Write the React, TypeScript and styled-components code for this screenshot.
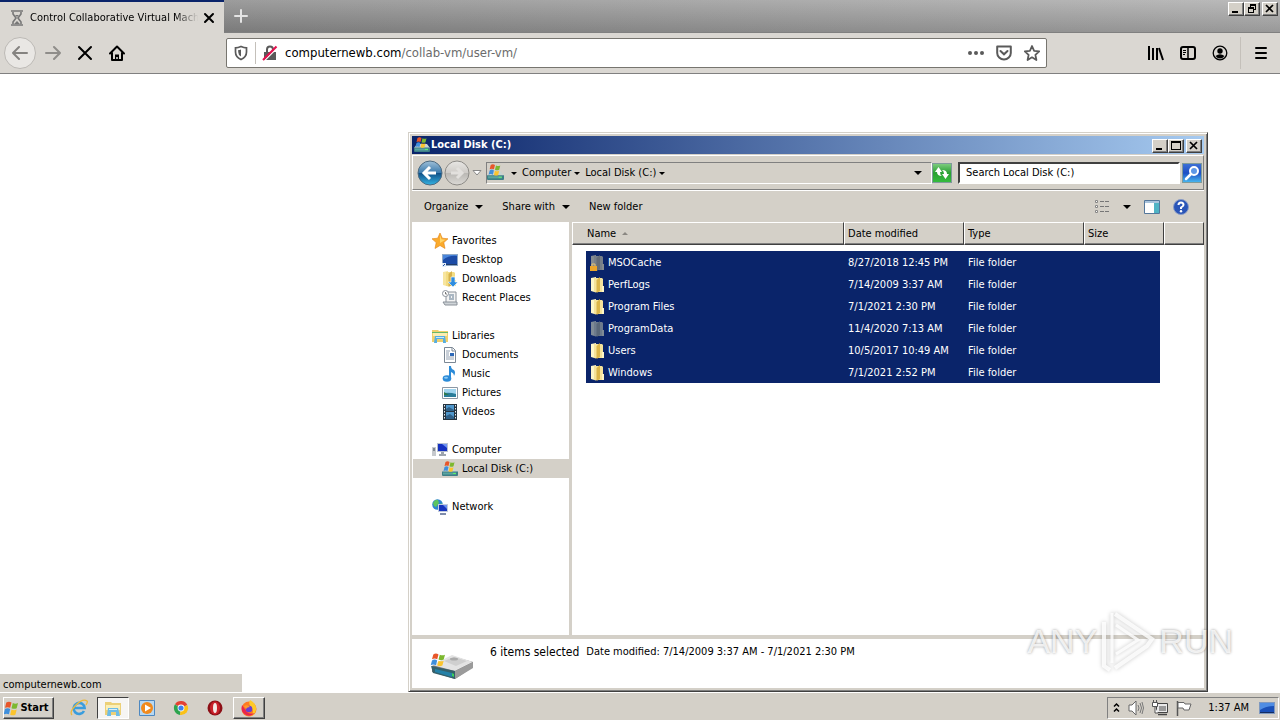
import React from "react";
import styled, { createGlobalStyle, css } from "styled-components";

const FACE = "#d4d0c8";
const NAVY = "#0a246a";
const SHADOW = "#808080";
const DARK = "#404040";
const UI_FONT = `Tahoma, "DejaVu Sans Condensed", "DejaVu Sans", sans-serif`;

const GlobalStyle = createGlobalStyle`
  *, *::before, *::after { box-sizing: border-box; }
  body { margin: 0; background: #fff; color: #000; font: 11px/14px ${UI_FONT}; }
  button, input { font: inherit; color: inherit; margin: 0; padding: 0; border: 0; background: none; border-radius: 0; }
  button { display: inline-flex; align-items: center; justify-content: center; }
  a { color: inherit; text-decoration: none; }
  svg { display: block; flex: none; }
`;

/* ---------- shell ---------- */

const Desktop = styled.div`
  position: relative;
  display: flex;
  flex-direction: column;
  min-height: 100vh;
  overflow: hidden;
`;

const raised = css`
  background: ${FACE};
  border: 1px solid;
  border-color: #fff ${DARK} ${DARK} #fff;
  box-shadow: inset -1px -1px ${SHADOW};
`;

/* ---------- browser ---------- */

const TabStrip = styled.header`
  display: flex;
  height: 33px;
  background: linear-gradient(#ffffff22, #00000022), linear-gradient(90deg, #868686, #b0b0b0);
  border-bottom: 1px solid ${SHADOW};
`;

const Tab = styled.div`
  display: flex;
  align-items: center;
  width: 224px;
  height: 33px;
  padding: 0 10px;
  background: #dad7d2;
  border-top: 2px solid ${NAVY};
`;

const TabTitle = styled.span`
  flex: 1;
  margin-left: 6px;
  white-space: nowrap;
  mask-image: linear-gradient(90deg, #000 84%, transparent 98%);
`;

const StripButton = styled.button`
  width: 34px;
  height: 32px;
`;

const Captions = styled.div`
  display: flex;
  margin-left: auto;
  padding: 2px 2px 0 0;
  & > :last-child { margin-left: 2px; }
`;

const CaptionButton = styled.button`
  ${raised}
  width: 16px;
  height: 14px;
`;

const NavBar = styled.nav`
  display: flex;
  align-items: center;
  height: 41px;
  background: #dad7d2;
  border-bottom: 1px solid ${SHADOW};
`;

const NavGroup = styled.div<{ $width: number; $end?: boolean }>`
  display: flex;
  align-items: center;
  flex: none;
  width: ${(p) => p.$width}px;
  padding: ${(p) => (p.$end ? 0 : "0 4px")};
  justify-content: ${(p) => (p.$end ? "flex-end" : "flex-start")};
`;

const ToolButton = styled.button<{ $round?: boolean }>`
  width: 32px;
  height: 32px;
  ${(p) => p.$round && css`
    border: 1px solid #bcb9b5;
    border-radius: 50%;
    background: #e9e7e4;
    margin-right: 1px;
  `}
`;

const MenuArea = styled.div`
  display: flex;
  align-items: center;
  justify-content: space-between;
  width: 44px;
  padding: 0 3px 0 4px;
`;

const Divider = styled.span<{ $height: number }>`
  width: 1px;
  height: ${(p) => p.$height}px;
  background: #c4c0ba;
`;

const UrlField = styled.div`
  display: flex;
  align-items: center;
  flex: 1;
  min-width: 0;
  height: 30px;
  background: #fff;
  border: 1px solid #77756f;
  border-radius: 2px;
`;

const Url = styled.a`
  flex: 1;
  margin-left: 1px;
  overflow: hidden;
  white-space: nowrap;
  font-size: 13px;
  line-height: 18px;
  color: #6b6b6b;
  b { font-weight: 400; color: #000; }
`;

const UrlButton = styled.button`
  width: 28px;
  height: 28px;
`;

const Page = styled.main`
  position: relative;
  display: flex;
  align-items: flex-end;
  flex: 1;
  min-height: 320px;
`;

const StatusBubble = styled.div`
  width: 242px;
  height: 18px;
  padding: 3px;
  line-height: 15px;
  background: ${FACE};
`;

/* ---------- explorer window ---------- */

const Window = styled.section`
  position: absolute;
  inset: 58px 72px 0 408px;
  display: flex;
  flex-direction: column;
  padding: 3px;
  background: ${FACE};
  border: 1px solid;
  border-color: ${FACE} ${DARK} ${DARK} ${FACE};
  box-shadow: inset 1px 1px #fff, inset -1px -1px ${SHADOW};
`;

const TitleBar = styled.header`
  display: flex;
  align-items: center;
  height: 18px;
  padding-left: 2px;
  gap: 1px;
  color: #fff;
  background: linear-gradient(90deg, ${NAVY}, #a6caf0);
`;

const WindowTitle = styled.h1`
  margin: 0;
  font-size: 11px;
  line-height: 14px;
`;

const AddressBar = styled.div`
  display: flex;
  align-items: center;
  height: 35px;
  margin-top: 1px;
  padding: 0 1px 0 4px;
  border: 1px solid;
  border-color: #fff ${SHADOW} ${SHADOW} #fff;
`;

const TravelButtons = styled.div`
  display: flex;
  align-items: center;
  gap: 1px;
  width: 69px;
`;

const Crumbs = styled.div`
  display: flex;
  align-items: center;
  flex: 1;
  min-width: 0;
  height: 22px;
  border: 1px solid;
  border-color: ${SHADOW} #fff #fff ${SHADOW};
  & > :first-child { margin-right: 3px; }
  & > :last-child { margin: 0 8px 0 auto; }
`;

const Crumb = styled.button`
  gap: 2px;
  padding: 0 1px 0 3px;
  white-space: nowrap;
`;

const GoButton = styled.button<{ $tone: string }>`
  width: 20px;
  height: 20px;
  border: 1px solid #7f9a9a;
  background: ${(p) => p.$tone};
`;

const SearchInput = styled.input`
  width: 222px;
  height: 22px;
  margin: 0 2px 0 6px;
  padding: 0 6px;
  background: #fff;
  border: 2px solid;
  border-color: ${DARK} #fff #fff ${DARK};
  &::placeholder { color: #000; opacity: 1; }
`;

const CommandBar = styled.div`
  display: flex;
  align-items: center;
  height: 32px;
  padding: 0 15px 0 12px;
  border-top: 1px solid #fff;
`;

const Command = styled.button`
  gap: 7px;
  margin-right: 19px;
`;

const ViewTools = styled.div`
  display: flex;
  align-items: center;
  gap: 13px;
  margin-left: auto;
`;

const Body = styled.div`
  display: flex;
  flex: 1;
  min-height: 0;
  background: #fff;
`;

const Sidebar = styled.nav`
  display: flex;
  flex-direction: column;
  gap: 19px;
  flex: none;
  width: 160px;
  padding: 9px 0 0 1px;
  border-right: 3px solid ${FACE};
`;

const Place = styled.a<{ $child?: boolean; $current?: boolean }>`
  display: flex;
  align-items: center;
  gap: 4px;
  height: 19px;
  padding-left: ${(p) => (p.$child ? 29 : 19)}px;
  line-height: 16px;
  background: ${(p) => (p.$current ? FACE : "none")};
  span { padding-top: 1px; }
`;

const FileTable = styled.table`
  align-self: flex-start;
  flex: 1;
  width: 100%;
  table-layout: fixed;
  border-collapse: separate;
  border-spacing: 0;
  white-space: nowrap;
  tbody::before { content: ""; display: table-row; height: 6px; }
`;

const HeadCell = styled.th<{ $inset?: number }>`
  height: 23px;
  padding: 1px 0 0 ${(p) => p.$inset ?? 3}px;
  text-align: left;
  font-weight: 400;
  background: ${FACE};
  border: 1px solid;
  border-color: #fff ${DARK} ${DARK} #fff;
  box-shadow: inset 0 -1px ${SHADOW};
  button { gap: 6px; }
`;

const Cell = styled.td<{ $blank?: boolean; $last?: boolean }>`
  height: 22px;
  padding: 1px 0 0 4px;
  color: #fff;
  background: ${(p) => (p.$blank ? "none" : NAVY)};
  border-right: ${(p) => (p.$last ? "4px solid #fff" : "0")};
`;

const FileName = styled.span`
  display: flex;
  align-items: center;
  gap: 3px;
`;

const Details = styled.footer`
  display: flex;
  height: 53px;
  padding: 5px 18px 0;
  background: #fff;
  border-top: 4px solid ${FACE};
`;

const Selection = styled.strong`
  margin: 0 7px 0 16px;
  font-size: 12px;
  line-height: 16px;
  font-weight: 400;
`;

const DetailText = styled.span`
  line-height: 16px;
`;

/* ---------- taskbar ---------- */

const Taskbar = styled.footer`
  display: flex;
  align-items: center;
  height: 28px;
  padding: 2px 1px 0 3px;
  background: ${FACE};
  border-top: 1px solid #fff;
`;

const StartButton = styled.button`
  ${raised}
  width: 51px;
  height: 22px;
  margin-right: 9px;
  padding-right: 4px;
  font-weight: 700;
`;

const TaskButton = styled.button<{ $state?: "open" | "active" }>`
  width: 32px;
  height: 22px;
  margin-right: 2px;
  ${(p) => p.$state === "open" && raised}
  ${(p) => p.$state === "active" && css`
    background: #f6f5f3;
    border: 1px solid;
    border-color: ${DARK} #fff #fff ${DARK};
  `}
`;

const Tray = styled.div`
  display: flex;
  align-items: center;
  gap: 8px;
  height: 22px;
  margin-left: auto;
  padding: 0 3px 0 5px;
  border: 1px solid;
  border-color: ${SHADOW} #fff #fff ${SHADOW};
`;

const Clock = styled.time`
  margin: 0 2px 0 8px;
`;

const Watermark = styled.div`
  position: absolute;
  right: 47px;
  bottom: 48px;
  display: flex;
  align-items: center;
  gap: 2px;
  font: 34px/62px "Liberation Sans", sans-serif;
  color: #ffffffcc;
  text-shadow: 0 0 3px #00000066;
  pointer-events: none;
  svg { filter: drop-shadow(0 0 2px #00000044); }
`;

/* ---------- icons ---------- */

type IconProps = { size?: number };

const Icon = ({ size = 16, w, children }: { size?: number; w?: number; children: React.ReactNode }) => (
  <svg width={w ?? size} height={size} viewBox={`0 0 ${w ?? size} ${size}`} aria-hidden="true">{children}</svg>
);

const Stroke = ({ d, color = "#000", width = 2, size = 16 }: { d: string; color?: string; width?: number; size?: number }) => (
  <Icon size={size}><path d={d} fill="none" stroke={color} strokeWidth={width} strokeLinecap="round" strokeLinejoin="round" /></Icon>
);

const Caret = ({ small }: { small?: boolean }) => (
  <Icon size={8}>{small ? <path d="M1 3h6L4 6z" /> : <path d="M0 2h8L4 6z" />}</Icon>
);

const Minimize = () => <Icon size={10}><path d="M1 7h6v2H1z" /></Icon>;
const Maximize = () => <Icon size={10}><path d="M0 0h10v9H0zM1 2v6h8V2z" fillRule="evenodd" /></Icon>;
const Restore = () => <Icon size={10}><path d="M3 0h6v6H7v3H1V3h2zM4 2v1h3v2h1V2zM2 5v3h4V5z" fillRule="evenodd" /></Icon>;
const Close = () => <Icon size={10}><path d="M1 1l7 7M8 1L1 8" stroke="#000" strokeWidth="1.7" /></Icon>;

const Flag = () => (
  <g>
    <path d="M1 2q2-1.500 4 0l-1 4q-2-1-4 0z" fill="#e8562a" />
    <path d="M6 2.300q2 1 4 0l-1 4q-2 1-4 0z" fill="#7cb82f" />
    <path d="M0 7q2-1.500 4 0l-1 4q-2-1-4 0z" fill="#3f8fdc" />
    <path d="M5 7.300q2 1 4 0l-1 4q-2 1-4 0z" fill="#fbc42d" />
  </g>
);

const DiskIcon = ({ size = 16 }: IconProps) => (
  <svg width={size} height={size} viewBox="0 0 16 16" aria-hidden="true">
    <path d="M3 7h10l3 4H0z" fill="#c9d3d2" />
    <path d="M0 10.500h16V14a1 1 0 0 1-1 1H1a1 1 0 0 1-1-1z" fill="#3d7f86" />
    <path d="M1 11.500h13v2H1z" fill="#5aa5a0" /><path d="M11 12h3v1h-3z" fill="#5ef06a" />
    <g transform="translate(2.500 -1)"><Flag /></g>
  </svg>
);

const BigDisk = () => (
  <Icon w={44} size={28}>
    <path d="M2 13L22 3l21 6v5L25 26 2 19z" fill="#777" />
    <path d="M2 12L22 2l21 7-18 9z" fill="#e3e3e3" />
    <path d="M14 8l10-4 13 4-11 5z" fill="#cfcfcf" /><ellipse cx="24" cy="6" rx="4" ry="1.500" fill="#aaa" />
    <path d="M25 18l18-9v6L25 26z" fill="#9b9b9b" />
    <path d="M1 13l24 5v8L3 20z" fill="#35606b" /><path d="M5 16l17 4v4L5 19z" fill="#2481a8" />
    <path d="M22 20l2 1v3l-2-1z" fill="#3ad05b" />
    <g transform="translate(2 -1) scale(1.300 1.200)"><Flag /></g>
  </Icon>
);

const Star = () => (
  <Icon><path d="M8 0l2.300 5.200 5.700.6-4.200 3.800 1.200 5.900L8 12.500l-5 3 1.200-5.900L0 5.800l5.700-.6z" fill="#fbab2c" stroke="#e08214" strokeWidth=".6" /><path d="M8 2l1.500 4.300 4 .5L8 10z" fill="#ffd568" /></Icon>
);
const DesktopIcon = () => (
  <Icon><path d="M0 2h16v12H0z" fill="#8fa9c8" /><path d="M1 3h14v9H1z" fill="#1c4ba6" /><path d="M1 8q6-5 14-4V3H1z" fill="#4a86dc" /><path d="M1 12h14v1H1z" fill="#223d69" /><path d="M0 11h4v4H0z" fill="#e4eef8" /><path d="M1 14l2-2" stroke="#1c4ba6" /></Icon>
);
const FolderShape = ({ body, edge, fold }: { body: string; edge: string; fold: string }) => (
  <>
    <path d="M1 1l5-1v15.500L1 14z" fill={edge} />
    <path d="M4 1h8l1 1v13H4z" fill={body} />
    <path d="M6.500 3L10 0v14l-3.500 2z" fill={fold} />
    <path d="M12 9h2v6h-2z" fill={edge} />
  </>
);
const Folder = () => <Icon w={15} size={16}><FolderShape body="#f5e39a" edge="#fdf6c8" fold="#dcb64a" /></Icon>;
const HiddenFolder = () => <Icon w={15} size={16}><FolderShape body="#6d7b8c" edge="#7f8b96" fold="#596778" /></Icon>;
const LockedFolder = () => (
  <Icon w={15} size={16}><FolderShape body="#777f88" edge="#858b8f" fold="#646c76" /><path d="M0 11h7v5H0z" fill="#eba52a" /><path d="M2 11V9h3v2" fill="none" stroke="#e4c374" /></Icon>
);
const Downloads = () => (
  <Icon><FolderShape body="#f3dc83" edge="#f7e59f" fold="#d6b24c" /><path d="M9 6h4v5h3l-5 5-5-5h3z" fill="#2f8ddf" stroke="#fff" strokeWidth=".6" /></Icon>
);
const Recent = () => (
  <Icon><path d="M4 2h10v11H4z" fill="#f4f4f4" stroke="#8a9199" /><path d="M1 12h14v3H3z" fill="#cfd4d8" stroke="#8a9199" /><path d="M7 5h5M7 7h2M10 7h2M7 9h5" stroke="#5f7890" /><circle cx="3.500" cy="3.500" r="3" fill="#fff" stroke="#8a9199" /><path d="M3.500 2v2H5" stroke="#555" fill="none" strokeWidth=".8" /></Icon>
);
const Libraries = () => (
  <Icon><path d="M0 2h6l1 1h9v11H0z" fill="#f0d06c" /><path d="M1 5h14v3H1z" fill="#fbedb1" /><path d="M0 4h16v1H0z" fill="#69b868" /><path d="M2 15l1-7h10l1 7h-3v-4H5v4z" fill="#56aee0" /><path d="M4 9h8v1H4z" fill="#c7e8fa" /></Icon>
);
const Documents = () => (
  <Icon><path d="M2.500.5h8l3 3v12h-11z" fill="#fff" stroke="#7b8794" /><path d="M10 1v3h3" fill="none" stroke="#7b8794" /><path d="M4 4h4M4 6h3M4 8h3M4 10h8M4 12h8" stroke="#93a1b2" /><path d="M8 6h4v3H8z" fill="#2c68b8" /></Icon>
);
const Music = () => (
  <Icon><path d="M7 0h2q0 3 3 4 2 2 0 6 0-3-3-4v7H7z" fill="#2b8bd8" /><ellipse cx="5" cy="12.500" rx="4.300" ry="3.200" fill="#2b8bd8" /><ellipse cx="4" cy="11.700" rx="2" ry="1" fill="#8fcbf5" /></Icon>
);
const Pictures = () => (
  <Icon><path d="M.5 2.500h15v11H.5z" fill="#fff" stroke="#8b98a5" /><path d="M2 4h12v8H2z" fill="#9fd4ee" /><path d="M2 8q6-1 12 1v3H2z" fill="#2a7d9a" /><path d="M2 7l5 3H2z" fill="#2f7a4c" /></Icon>
);
const Videos = () => (
  <Icon><path d="M1 0h14v16H1z" fill="#263440" /><path d="M4 1h8v6H4zM4 8h8v7H4z" fill="#4f97cc" /><path d="M4 5l3-2 5 3v1H4zM4 12l4-2 4 3v2H4z" fill="#2f6088" /><path d="M2.500 1v15M13.500 1v15" stroke="#e6edf2" strokeDasharray="1.500 1.500" /></Icon>
);
const Computer = () => (
  <Icon><path d="M5 1h11v9H5z" fill="#b8c0cf" /><path d="M6 2h9v7H6z" fill="#1531c0" /><path d="M10 2h5v4z" fill="#6e92f2" /><path d="M7 12h7v2H7zM9 10h3v2H9z" fill="#9da4ad" /><path d="M0 5h4v9H0z" fill="#c6c9cd" /><path d="M1 6h2v3H1z" fill="#7e8790" /></Icon>
);
const Network = () => (
  <Icon><circle cx="5.500" cy="5.500" r="5.300" fill="#2e86cf" /><path d="M1 4q2-4 5-3l1 3-3 4-2-1zM7 6l3-2v4z" fill="#5cc45e" /><path d="M6 5h10v8H6z" fill="#c2cbdc" /><path d="M7 6h8v6H7z" fill="#1734bd" /><path d="M11 6h4v4z" fill="#6c90ee" /><path d="M8 14h6v2H8z" fill="#7f8cab" /></Icon>
);
const Explorer = () => (
  <Icon size={18}><path d="M1 3h6l1 1h9v12H1z" fill="#ecd077" /><path d="M2 6h14v5H2z" fill="#faefb8" /><path d="M3 17l1-8h10l2 8h-4v-4H7v4z" fill="#6dbce6" /><path d="M5 10h8v1H5z" fill="#d6effb" /></Icon>
);
const Travel = ({ back }: { back?: boolean }) => (
  <Icon size={26}>
    <defs>
      <linearGradient id={back ? "tb" : "tf"} x2="0" y2="1">
        <stop offset="0" stopColor={back ? "#9fc0d8" : "#e8e7e4"} /><stop offset=".48" stopColor={back ? "#3d7cae" : "#cfccc8"} />
        <stop offset=".5" stopColor={back ? "#0f4f86" : "#b9b7b3"} /><stop offset="1" stopColor={back ? "#35b3e3" : "#dcdad6"} />
      </linearGradient>
    </defs>
    <circle cx="13" cy="13" r="12" fill={`url(#${back ? "tb" : "tf"})`} stroke={back ? "#4d6a80" : "#8d8b87"} />
    {back
      ? <path d="M13 7l-6 6 6 6M8 13h11" fill="none" stroke="#fff" strokeWidth="3" />
      : <path d="M13 8l5 5-5 5M18 13H7" fill="none" stroke="#e2e0dd" strokeWidth="3" />}
  </Icon>
);
const Refresh = () => (
  <Icon>
    <path d="M1 7l3.500-5L8 7H6q0 3 2 4-5 0-5-4z" fill="#fff" />
    <path d="M15 9l-3.500 5L8 9h2q0-3-2-4 5 0 5 4z" fill="#fff" />
  </Icon>
);
const Magnifier = () => (
  <Icon><circle cx="10" cy="6" r="4" fill="#5e97e6" stroke="#fff" strokeWidth="2" /><path d="M7 9l-5 5" stroke="#fff" strokeWidth="2.500" strokeLinecap="round" /></Icon>
);
const ListView = () => (
  <Icon><path d="M1.500 1.500h2v2h-2zM1.500 6.500h2v2h-2zM1.500 11.500h2v2h-2z" fill="#fff" stroke="#868686" /><path d="M6 2.500h4M11 2.500h4M6 7.500h4M11 7.500h4M6 12.500h4M11 12.500h4" stroke="#777" /></Icon>
);
const PreviewPane = () => (
  <Icon><path d="M.5 1.500h15v13H.5z" fill="#fff" stroke="#54779b" /><path d="M1 2h14v2H1z" fill="#a9c3dc" /><path d="M10 4h5v10h-5z" fill="#4fb3c5" /></Icon>
);
const Help = () => (
  <Icon><circle cx="8" cy="8" r="7.500" fill="#2a55b8" stroke="#8a9cc6" /><path d="M5.500 6q0-2.500 2.500-2.500T10.500 6Q10.500 7 8 8.500V10" fill="none" stroke="#fff" strokeWidth="2" /><circle cx="8" cy="12.300" r="1.200" fill="#fff" /></Icon>
);
const Hourglass = () => (
  <Icon w={14} size={16}><path d="M1 1h12M1 15h12M3 2v2l3 4-3 4v2M11 2v2L8 8l3 4v2" fill="none" stroke="#777" strokeWidth="1.600" /><path d="M5 5h4L7 7zM4 14l3-3 3 3z" fill="#777" /></Icon>
);
const Home = () => (
  <Icon><path d="M1 8.500L8 1.500l7 7M3 8v7h10V8" fill="none" stroke="#000" strokeWidth="2" strokeLinejoin="round" strokeLinecap="round" /><path d="M6 14v-4.500h4V14H8.800v-2H7.200v2z" /></Icon>
);
const Shield = () => (
  <Icon><path d="M8 1.500q3 1.300 5.500 1.300V7q0 5-5.500 7.500Q2.500 12 2.500 7V2.800Q5 2.800 8 1.500z" fill="none" stroke="#5a5a5a" strokeWidth="1.700" /><path d="M8 4.500v7Q5.200 10 5.200 7V5q1.500 0 2.800-.5z" fill="#5a5a5a" /></Icon>
);
const BrokenLock = () => (
  <Icon><path d="M5 8V4.500a3 3 0 0 1 6 0V8" fill="none" stroke="#5a5a5a" strokeWidth="2" /><path d="M2 7h12v8H2z" fill="#5a5a5a" /><path d="M2 16L15 3" stroke="#fff" strokeWidth="1.500" /><path d="M1 15L14.500 1.500" stroke="#e3124f" strokeWidth="2.200" /></Icon>
);
const More = () => <Icon>{[2, 8, 14].map((x) => <circle key={x} cx={x} cy="8" r="2" fill="#5a5a5a" />)}</Icon>;
const Pocket = () => (
  <Icon><path d="M1.200 1.500h13.600V8a6.800 6.500 0 0 1-13.600 0z" fill="none" stroke="#5a5a5a" strokeWidth="2" strokeLinejoin="round" /><path d="M4.500 6L8 9.300 11.500 6" fill="none" stroke="#5a5a5a" strokeWidth="2" strokeLinecap="round" /></Icon>
);
const Bookmark = () => <Stroke width={1.8} color="#5a5a5a" d="M8 1l2.100 4.800 5.100.5-3.800 3.500 1 5.200L8 12.300 3.600 15l1-5.200L.8 6.300l5.100-.5z" />;
const Library = () => <Icon><path d="M1 1v14M5 3v12M9 3v12M11 3l4 12" stroke="#000" strokeWidth="2" fill="none" /></Icon>;
const SidebarIcon = () => (
  <Icon><rect x="1" y="2" width="14" height="12" rx="2" fill="none" stroke="#000" strokeWidth="2" /><path d="M8 2v12" stroke="#000" strokeWidth="1.500" /><path d="M3 5.500h3M3 7.500h3M3 9.500h2" stroke="#000" /></Icon>
);
const Account = () => (
  <Icon><circle cx="8" cy="8" r="6.800" fill="none" stroke="#000" strokeWidth="1.300" /><circle cx="8" cy="6" r="2.700" /><path d="M3.500 11q4.500-3.500 9 0-2 2.500-4.500 2.500T3.500 11z" /></Icon>
);
const Menu = () => <Icon><path d="M3 3h10M3 8h10M3 13h10" stroke="#000" strokeWidth="2" strokeLinecap="round" /></Icon>;
const IE = () => (
  <Icon size={18}><path d="M14 12a5.500 5.500 0 1 1 .6-3H5" fill="none" stroke="#3a9ddd" strokeWidth="2.600" /><path d="M2 16Q-1 13 6 6T17 2q1 1-1 4" fill="none" stroke="#ecb93c" strokeWidth="1.300" /></Icon>
);
const MediaPlayer = () => (
  <Icon><path d="M.5.5h15v15H.5z" fill="#b7d8f2" stroke="#4e88c0" /><circle cx="8" cy="8" r="6" fill="#f18a1c" /><path d="M6 4.500v7L12 8z" fill="#fff" /></Icon>
);
const Chrome = () => (
  <Icon><path d="M8 8L2 4.300A7 7 0 0 1 14.300 5z" fill="#e34133" /><path d="M8 8h-1L2 4.300A7 7 0 0 0 7 15z" fill="#2da44e" /><path d="M8 8l6.300-3A7 7 0 0 1 7 15z" fill="#fbc116" /><circle cx="8" cy="8" r="3.400" fill="#fff" /><circle cx="8" cy="8" r="2.600" fill="#3f80ee" /></Icon>
);
const Opera = () => <Icon><circle cx="8" cy="8" r="7.500" fill="#8d0f16" /><ellipse cx="8" cy="8" rx="5" ry="6.500" fill="#c9202a" /><ellipse cx="8" cy="8" rx="2" ry="5" fill="#f3e9e6" /></Icon>;
const Firefox = () => (
  <Icon size={18}><circle cx="9" cy="10" r="7.500" fill="#ff7a22" /><path d="M10 1q7 4 6 10-1 5-5 6 4-5 0-9-3-3-1-7z" fill="#ffc928" /><path d="M2 6q-2 7 4 10 5 2 9-2-5 2-8-1Q4 9 2 6z" fill="#e9254e" /><circle cx="9" cy="10" r="3.300" fill="#6a3fd0" /><path d="M4 7q4-2 6 1-3 0-4 2z" fill="#ff9a2c" /></Icon>
);
const Expand = () => <Icon w={7} size={12}><path d="M1 4.500L3.500 2 6 4.500M1 9.500L3.500 7 6 9.500" fill="none" stroke="#000" strokeWidth="1.500" /></Icon>;
const Speaker = () => (
  <Icon><path d="M1 5h3l4-4v14l-4-4H1z" fill="#fff" stroke="#666" /><path d="M10 5q2 3 0 6M12 3q3 5 0 10M14 2q3 6 0 12" fill="none" stroke="#777" /></Icon>
);
const Connection = () => (
  <Icon><path d="M4.500 3.500h11v9h-11z" fill="#e9e9e9" stroke="#444" /><path d="M7 6h7v5H7z" fill="#999" /><path d="M6 14.500h9" stroke="#444" strokeWidth="1.500" /><path d="M.5 2.500h5v4h-5zM1.500 0v2M4.500 0v2M3 7v6h3" fill="#fff" stroke="#555" /></Icon>
);
const TrayFlag = () => <Icon><path d="M1.500 1v15" stroke="#555" strokeWidth="1.500" /><path d="M2 2.500h6l1 1.500h6l-2 6H8L7 8H2z" fill="#fff" stroke="#666" /></Icon>;
const ShowDesktop = () => <Icon><path d="M0 2h16v12H0z" fill="#7f99c0" /><path d="M1 3h14v10H1z" fill="#1a50b8" /><path d="M1 3h14v3Q7 6 1 10z" fill="#4f8de4" /><path d="M1 12h14v1H1z" fill="#142d62" /></Icon>;
const StartFlag = () => <Icon><g transform="translate(1 0) scale(1.300)"><Flag /></g></Icon>;
const PlayMark = () => (
  <Icon w={58} size={62}>
    <path d="M5 12v44l6 4M16 4l37 25-5 7-32 22" fill="none" stroke="#ffffffd0" strokeWidth="4" />
    <path d="M13 3v50M17 15l22 15-22 14" fill="none" stroke="#ffffffd0" strokeWidth="3" />
  </Icon>
);

/* ---------- data ---------- */

const places = [
  { name: "Favorites", icon: <Star />, items: [["Desktop", <DesktopIcon />], ["Downloads", <Downloads />], ["Recent Places", <Recent />]] },
  { name: "Libraries", icon: <Libraries />, items: [["Documents", <Documents />], ["Music", <Music />], ["Pictures", <Pictures />], ["Videos", <Videos />]] },
  { name: "Computer", icon: <Computer />, items: [["Local Disk (C:)", <DiskIcon />]] },
  { name: "Network", icon: <Network />, items: [] },
] as { name: string; icon: React.ReactNode; items: [string, React.ReactNode][] }[];

const files: [string, string, React.ReactNode][] = [
  ["MSOCache", "8/27/2018 12:45 PM", <LockedFolder />],
  ["PerfLogs", "7/14/2009 3:37 AM", <Folder />],
  ["Program Files", "7/1/2021 2:30 PM", <Folder />],
  ["ProgramData", "11/4/2020 7:13 AM", <HiddenFolder />],
  ["Users", "10/5/2017 10:49 AM", <Folder />],
  ["Windows", "7/1/2021 2:52 PM", <Folder />],
];

const Browser = () => (
  <>
    <TabStrip>
      <Tab>
        <Hourglass />
        <TabTitle>Control Collaborative Virtual Machi</TabTitle>
        <button aria-label="Close tab"><Stroke size={14} width={2} d="M3 3l8 8M11 3l-8 8" /></button>
      </Tab>
      <StripButton aria-label="New tab"><Stroke color="#e4e4e4" d="M8 2v12M2 8h12" /></StripButton>
      <Captions>
        <CaptionButton aria-label="Minimize"><Minimize /></CaptionButton>
        <CaptionButton aria-label="Restore"><Restore /></CaptionButton>
        <CaptionButton aria-label="Close"><Close /></CaptionButton>
      </Captions>
    </TabStrip>
    <NavBar>
      <NavGroup $width={226}>
        <ToolButton $round aria-label="Back"><Stroke color="#858380" d="M15 8H1M7 2L1 8l6 6" /></ToolButton>
        <ToolButton aria-label="Forward"><Stroke color="#8f8d8a" d="M1 8h14M9 2l6 6-6 6" /></ToolButton>
        <ToolButton aria-label="Stop"><Stroke d="M2 2l12 12M14 2L2 14" /></ToolButton>
        <ToolButton aria-label="Home"><Home /></ToolButton>
      </NavGroup>
      <UrlField>
        <UrlButton aria-label="Tracking protection"><Shield /></UrlButton>
        <Divider $height={22} />
        <UrlButton aria-label="Connection not secure"><BrokenLock /></UrlButton>
        <Url href="#"><b>computernewb.com</b>/collab-vm/user-vm/</Url>
        <UrlButton aria-label="Page actions"><More /></UrlButton>
        <UrlButton aria-label="Save to Pocket"><Pocket /></UrlButton>
        <UrlButton aria-label="Bookmark"><Bookmark /></UrlButton>
      </UrlField>
      <NavGroup $width={233} $end>
        <ToolButton aria-label="Library"><Library /></ToolButton>
        <ToolButton aria-label="Sidebars"><SidebarIcon /></ToolButton>
        <ToolButton aria-label="Account"><Account /></ToolButton>
        <MenuArea>
          <Divider $height={32} />
          <ToolButton aria-label="Menu"><Menu /></ToolButton>
        </MenuArea>
      </NavGroup>
    </NavBar>
  </>
);

const ExplorerWindow = () => (
  <Window aria-label="Local Disk (C:)">
    <TitleBar>
      <DiskIcon />
      <WindowTitle>Local Disk (C:)</WindowTitle>
      <Captions>
        <CaptionButton aria-label="Minimize"><Minimize /></CaptionButton>
        <CaptionButton aria-label="Maximize"><Maximize /></CaptionButton>
        <CaptionButton aria-label="Close"><Close /></CaptionButton>
      </Captions>
    </TitleBar>
    <AddressBar>
      <TravelButtons>
        <button aria-label="Back"><Travel back /></button>
        <button aria-label="Forward"><Travel /></button>
        <button aria-label="Recent pages"><Icon w={12} size={8}><path d="M2 1.500h8L6 6z" fill="#fff" stroke="#888" /></Icon></button>
      </TravelButtons>
      <Crumbs>
        <DiskIcon size={17} />
        <Crumb aria-label="Locations"><Caret small /></Crumb>
        <Crumb>Computer <Caret small /></Crumb>
        <Crumb>Local Disk (C:) <Caret small /></Crumb>
        <Crumb aria-label="Previous locations"><Caret /></Crumb>
      </Crumbs>
      <GoButton $tone="linear-gradient(#7ccb7c, #28a032 50%, #35bb3d)" aria-label="Refresh"><Refresh /></GoButton>
      <SearchInput aria-label="Search" placeholder="Search Local Disk (C:)" />
      <GoButton $tone="linear-gradient(#3c6fd6, #1e4fc4 50%, #46b4ee)" aria-label="Go"><Magnifier /></GoButton>
    </AddressBar>
    <CommandBar>
      <Command>Organize <Caret /></Command>
      <Command>Share with <Caret /></Command>
      <Command>New folder</Command>
      <ViewTools>
        <button aria-label="Change view"><ListView /></button>
        <button aria-label="More views"><Caret /></button>
        <button aria-label="Preview pane"><PreviewPane /></button>
        <button aria-label="Help"><Help /></button>
      </ViewTools>
    </CommandBar>
    <Body>
      <Sidebar>
        {places.map((group) => (
          <div key={group.name}>
            <Place href="#">{group.icon}<span>{group.name}</span></Place>
            {group.items.map(([name, icon]) => (
              <Place key={name} href="#" $child $current={name.startsWith("Local")}>{icon}<span>{name}</span></Place>
            ))}
          </div>
        ))}
      </Sidebar>
      <FileTable>
        <colgroup>
          <col style={{ width: 14 }} /><col style={{ width: 258 }} /><col style={{ width: 120 }} />
          <col style={{ width: 120 }} /><col style={{ width: 80 }} /><col />
        </colgroup>
        <thead>
          <tr>
            <HeadCell colSpan={2} $inset={14}>
              <button>Name <Icon w={6} size={6}><path d="M0 4l3-3 3 3z" fill="#8a8782" /></Icon></button>
            </HeadCell>
            <HeadCell>Date modified</HeadCell>
            <HeadCell>Type</HeadCell>
            <HeadCell>Size</HeadCell>
            <HeadCell aria-hidden="true" />
          </tr>
        </thead>
        <tbody>
          {files.map(([name, date, icon]) => (
            <tr key={name}>
              <Cell $blank />
              <Cell><FileName>{icon}{name}</FileName></Cell>
              <Cell>{date}</Cell>
              <Cell>File folder</Cell>
              <Cell $last />
            </tr>
          ))}
        </tbody>
      </FileTable>
    </Body>
    <Details>
      <Icon w={44} size={40}><g transform="translate(0 9)"><BigDisk /></g></Icon>
      <Selection>6 items selected</Selection>
      <DetailText>Date modified: 7/14/2009 3:37 AM - 7/1/2021 2:30 PM</DetailText>
    </Details>
  </Window>
);

export default function App() {
  return (
    <Desktop>
      <GlobalStyle />
      <Browser />
      <Page>
        <StatusBubble>computernewb.com</StatusBubble>
        <ExplorerWindow />
      </Page>
      <Taskbar>
        <StartButton><StartFlag />Start</StartButton>
        <TaskButton aria-label="Internet Explorer"><IE /></TaskButton>
        <TaskButton $state="active" aria-label="Explorer"><Explorer /></TaskButton>
        <TaskButton aria-label="Media Player"><MediaPlayer /></TaskButton>
        <TaskButton aria-label="Chrome"><Chrome /></TaskButton>
        <TaskButton aria-label="Opera"><Opera /></TaskButton>
        <TaskButton $state="open" aria-label="Firefox"><Firefox /></TaskButton>
        <Tray>
          <Expand /><Speaker /><Connection /><TrayFlag />
          <Clock>1:37 AM</Clock>
          <ShowDesktop />
        </Tray>
      </Taskbar>
      <Watermark>ANY<PlayMark />RUN</Watermark>
    </Desktop>
  );
}
